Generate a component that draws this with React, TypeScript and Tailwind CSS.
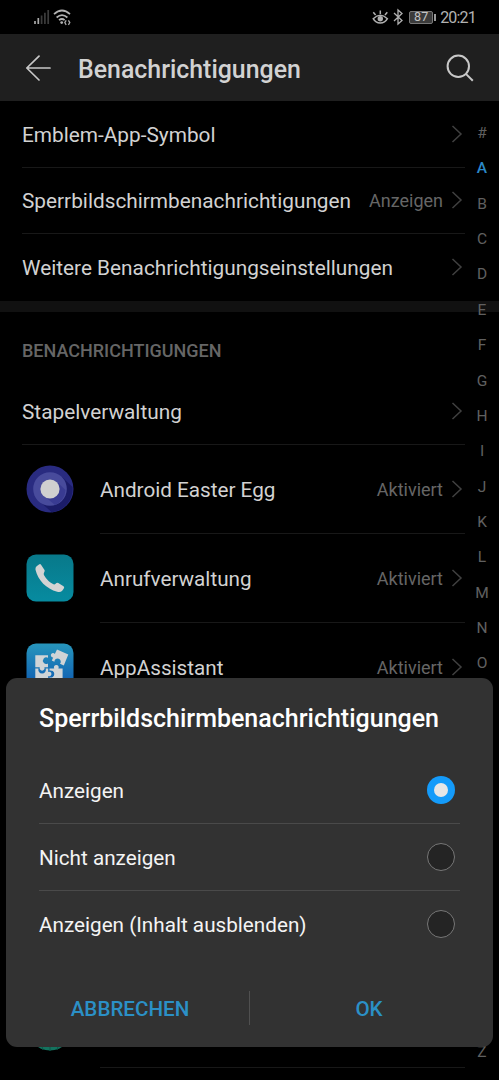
import type { ReactNode } from "react";

const LETTERS = "#ABCDEFGHIJKLMNOPQRSTUVWXYZ".split("");

function Chevron() {
  return (
    <svg className="block shrink-0" width="12" height="20" viewBox="0 0 12 20" fill="none" stroke="#404040" strokeWidth="1.5">
      <path d="M1.5 2 L10 10 L1.5 18" />
    </svg>
  );
}

function SettingRow({ label, value, line = true }: { label: string; value?: string; line?: boolean }) {
  return (
    <div className={`flex h-[66.6px] items-center border-b ${line ? "border-[#181818]" : "border-transparent"}`}>
      <span className="flex-1 whitespace-nowrap pt-[2px] text-[20.8px] leading-6 text-[#d2d2d2]">{label}</span>
      {value && <span className="mr-[8px] pt-[2px] text-[18px] leading-6 text-[#666]">{value}</span>}
      <span className="mr-[2px]"><Chevron /></span>
    </div>
  );
}

function AppRow({ icon, label }: { icon: ReactNode; label?: string }) {
  return (
    <div className="flex h-[89px] shrink-0">
      <div className="flex w-[78px] items-center pl-1">{icon}</div>
      <div className="flex flex-1 items-center border-b border-[#181818]">
        {label && (
          <>
            <span className="flex-1 pt-[2px] text-[20.7px] leading-6 text-[#d2d2d2]">{label}</span>
            <span className="mr-[8px] pt-[2px] text-[18px] leading-6 text-[#666]">Aktiviert</span>
            <span className="mr-[2px]"><Chevron /></span>
          </>
        )}
      </div>
    </div>
  );
}

function EasterEggIcon() {
  return (
    <svg width="48" height="48" viewBox="0 0 48 48">
      <circle cx="24" cy="24" r="23.5" fill="#292b80" />
      <path d="M36 12 L46.5 22 A23.5 23.5 0 0 1 26 47.4 L12 35Z" fill="#1b1c68" />
      <circle cx="24" cy="24" r="16.8" fill="#484b9c" />
      <path d="M31 17 L39.5 25 A16.8 16.8 0 0 1 29 40 L17 30Z" fill="#393b92" />
      <circle cx="24" cy="24" r="9.6" fill="#d0d0d0" />
    </svg>
  );
}

function PhoneIcon() {
  return (
    <svg width="48" height="48" viewBox="0 0 48 48">
      <defs>
        <linearGradient id="phone-bg" x1="0" y1="0" x2="0" y2="1">
          <stop offset="0" stopColor="#08798a" />
          <stop offset="1" stopColor="#078ba0" />
        </linearGradient>
      </defs>
      <rect x="0.5" y="0.5" width="47" height="47" rx="9.5" fill="url(#phone-bg)" />
      <path
        d="M10.6 12.3 L13 10.4 Q14.3 9.5 15.2 10.9 L18.5 16 Q19.1 17.1 18.2 18.2 Q17.1 19.8 18.2 21.6 Q21.8 27.8 27.5 30.3 Q28.6 30.8 29.6 29.7 Q30.8 28.2 32.3 29 L37.5 32.2 Q38.7 33.2 37.8 34.6 L36.2 36.7 Q34.4 38.8 31.2 37.8 C20.5 34.8 11.9 26.3 9.5 15.7 Q9.1 13.7 10.6 12.3Z"
        fill="#d3d3d3"
      />
    </svg>
  );
}

function PuzzleIcon() {
  return (
    <svg width="48" height="48" viewBox="0 0 48 48">
      <defs>
        <linearGradient id="puzzle-bg" x1="0" y1="0" x2="0" y2="1">
          <stop offset="0" stopColor="#2796bc" />
          <stop offset="1" stopColor="#0c55b0" />
        </linearGradient>
      </defs>
      <rect x="0.5" y="0.5" width="47" height="47" rx="9.5" fill="url(#puzzle-bg)" />
      <path d="M9.3 12.2 H22 V14.8 A3.3 3.3 0 1 0 22 20.4 V24.2 H18.4 A2.5 2.5 0 1 1 13.8 24.2 H9.3Z" fill="#d0d4d6" />
      <path d="M31 6.5 L42.3 11.5 L37.8 22.4 L34 20.8 A3.2 3.2 0 1 0 28.4 18.8 L25.8 17.6 L27.2 14.4 A2.2 2.2 0 1 1 28.8 10.9Z" fill="#d0d4d6" />
      <path d="M9.3 25.5 H12.5 A3.8 3.8 0 1 0 19.7 25.5 H22.2 V28.9 A2.3 2.3 0 1 1 22.2 33.1 V38 H9.3Z" fill="#d0d4d6" />
      <path d="M23.5 25.5 H28.2 A2.4 2.4 0 1 1 32.4 25.5 H36.6 V38 H23.5 V34.4 A3.6 3.6 0 1 0 23.5 27.6Z" fill="#d0d4d6" />
    </svg>
  );
}

function GlobeIcon() {
  return (
    <svg width="48" height="56" viewBox="0 0 48 56">
      <circle cx="24" cy="32" r="23.5" fill="#14735f" />
      <path d="M24 9 V56 M17 11 Q9 32 17 55 M31 11 Q39 32 31 55" stroke="#0c5849" fill="none" />
    </svg>
  );
}

function Option({ label, selected = false, line = true }: { label: string; selected?: boolean; line?: boolean }) {
  return (
    <div className={`flex h-[67.3px] items-center border-b pr-[5px] ${line ? "border-[#4a4a4a]" : "border-transparent"}`}>
      <span className="flex-1 pt-[2px] text-[20.7px] leading-6 text-[#f4f4f4]">{label}</span>
      {selected ? (
        <span className="flex size-7 items-center justify-center rounded-full bg-[#149bfa]">
          <span className="size-3.5 rounded-full bg-[#e6e6e6]" />
        </span>
      ) : (
        <span className="size-7 rounded-full border border-[#777] bg-[#242424]" />
      )}
    </div>
  );
}

function StatusBar() {
  return (
    <div className="flex h-[34px] shrink-0 items-center justify-between pl-[33px] pr-[23px]">
      <svg width="38" height="18" viewBox="0 0 38 18" fill="none">
        <g strokeWidth="1.7">
          <path d="M2 13 V16" stroke="#aaa" />
          <path d="M5.3 10 V16" stroke="#aaa" />
          <path d="M8.6 7.6 V16 M11.9 4.8 V16 M15.2 2 V16" stroke="#3c3c3c" />
        </g>
        <g stroke="#b2b2b2" strokeWidth="1.7">
          <path d="M21 6.2 Q29 -1.2 37 6.2" />
          <path d="M23.6 9.5 Q29 4.6 34.4 9.5" />
          <path d="M26 12.2 Q29 9.8 31.6 12.2" />
        </g>
        <circle cx="28.7" cy="14.6" r="1.4" fill="#b2b2b2" />
        <path d="M33.2 12.4 L31.8 14.6 L33.2 16.8 M35.4 12.4 L36.8 14.6 L35.4 16.8" stroke="#aaa" strokeWidth="1.3" />
      </svg>
      <div className="flex items-center">
        <svg width="17" height="16" viewBox="0 0 17 16" fill="none" stroke="#b0b0b0" strokeWidth="1.5">
          <path d="M1.2 9.7 Q8.3 2.8 15.4 9.7 Q13 14 8.3 14 Q3.6 14 1.2 9.7Z" />
          <circle cx="8.3" cy="9.7" r="2.7" fill="#b0b0b0" stroke="none" />
          <path d="M8.3 1.5 V5 M3.6 6 L1.3 3.3 M13 6 L15.3 3.3" />
        </svg>
        <svg className="ml-[3px]" width="12" height="18" viewBox="0 0 12 18" fill="none" stroke="#b0b0b0" strokeWidth="1.3">
          <path d="M2 5 L10 12.5 L6 16 V2 L10 5.5 L2 13" />
        </svg>
        <div className="ml-[5px] flex h-[13px] w-6 items-center justify-center rounded-[2px] border border-[#777] bg-[#3b3b3b] pt-px text-[12.5px] leading-none text-[#c4c4c4]">
          87
        </div>
        <span className="ml-px h-[7px] w-[2px] bg-[#999]" />
        <span className="ml-[4px] pt-[2px] text-[16px] leading-none tracking-[-0.8px] text-[#b2b2b2]">20:21</span>
      </div>
    </div>
  );
}

export default function App() {
  return (
    <div className="relative h-[1080px] w-[499px] overflow-hidden bg-black font-[Roboto,sans-serif]">
      <div className="flex h-full flex-col">
        <StatusBar />
        <header className="flex h-[67px] shrink-0 items-center bg-[#1f1f1f] pl-[25px] pr-[25px]">
          <svg width="27" height="26" viewBox="0 0 27 26" fill="none" stroke="#c8c8c8" strokeWidth="1.7" strokeLinecap="round" strokeLinejoin="round">
            <path d="M25 13 H2 M14 1.2 L1.8 13 L14 25" />
          </svg>
          <h1 className="ml-[26px] flex-1 pt-[4px] text-[24.9px] font-medium leading-8 text-[#d2d2d2]">Benachrichtigungen</h1>
          <svg width="28" height="28" viewBox="0 0 28 28" fill="none" stroke="#c8c8c8" strokeWidth="2">
            <circle cx="12.3" cy="12.3" r="10.7" />
            <path d="M19.9 19.9 L26.8 26.8" />
          </svg>
        </header>
        <main className="relative flex min-h-0 flex-1">
          <div className="flex w-full flex-col">
            <section className="pl-[22px] pr-[34px]">
              <SettingRow label="Emblem-App-Symbol" />
              <SettingRow label="Sperrbildschirmbenachrichtigungen" value="Anzeigen" />
              <SettingRow label="Weitere Benachrichtigungseinstellungen" line={false} />
            </section>
            <div className="h-[11px] shrink-0 bg-[#111]" />
            <section className="flex flex-col pl-[22px] pr-[34px]">
              <h2 className="flex h-[66.6px] items-end pb-[15px] text-[18px] font-medium leading-6 text-[#666]">BENACHRICHTIGUNGEN</h2>
              <SettingRow label="Stapelverwaltung" />
              <AppRow icon={<EasterEggIcon />} label="Android Easter Egg" />
              <AppRow icon={<PhoneIcon />} label="Anrufverwaltung" />
              <AppRow icon={<PuzzleIcon />} label="AppAssistant" />
              <div className="h-[267px] shrink-0" />
              <AppRow icon={<GlobeIcon />} />
            </section>
          </div>
          <nav className="absolute right-[7px] top-[15.2px] flex w-5 flex-col">
            {LETTERS.map((letter) => (
              <span
                key={letter}
                className={`flex h-[35.35px] items-center justify-center text-[15.5px] leading-none ${letter === "A" ? "font-medium text-[#2b88c9]" : "text-[#606060]"}`}
              >
                {letter}
              </span>
            ))}
          </nav>
        </main>
      </div>

      <div role="dialog" className="absolute left-[6px] top-[678px] flex h-[369px] w-[487px] flex-col rounded-[11px] bg-[#323232] px-[33px]">
        <h2 className="flex h-[78.5px] shrink-0 items-center whitespace-nowrap pt-[3px] text-[25px] font-medium leading-8 text-white">Sperrbildschirmbenachrichtigungen</h2>
        <Option label="Anzeigen" selected />
        <Option label="Nicht anzeigen" />
        <Option label="Anzeigen (Inhalt ausblenden)" line={false} />
        <div className="mt-[33px] flex h-[34px] items-center text-[20.6px] font-medium text-[#2b90c6]">
          <button className="flex-1 pr-[28px] pt-[2px]">ABBRECHEN</button>
          <span className="h-full w-px bg-[#505050]" />
          <button className="flex-1 pl-[28px] pt-[2px]">OK</button>
        </div>
      </div>
    </div>
  );
}
